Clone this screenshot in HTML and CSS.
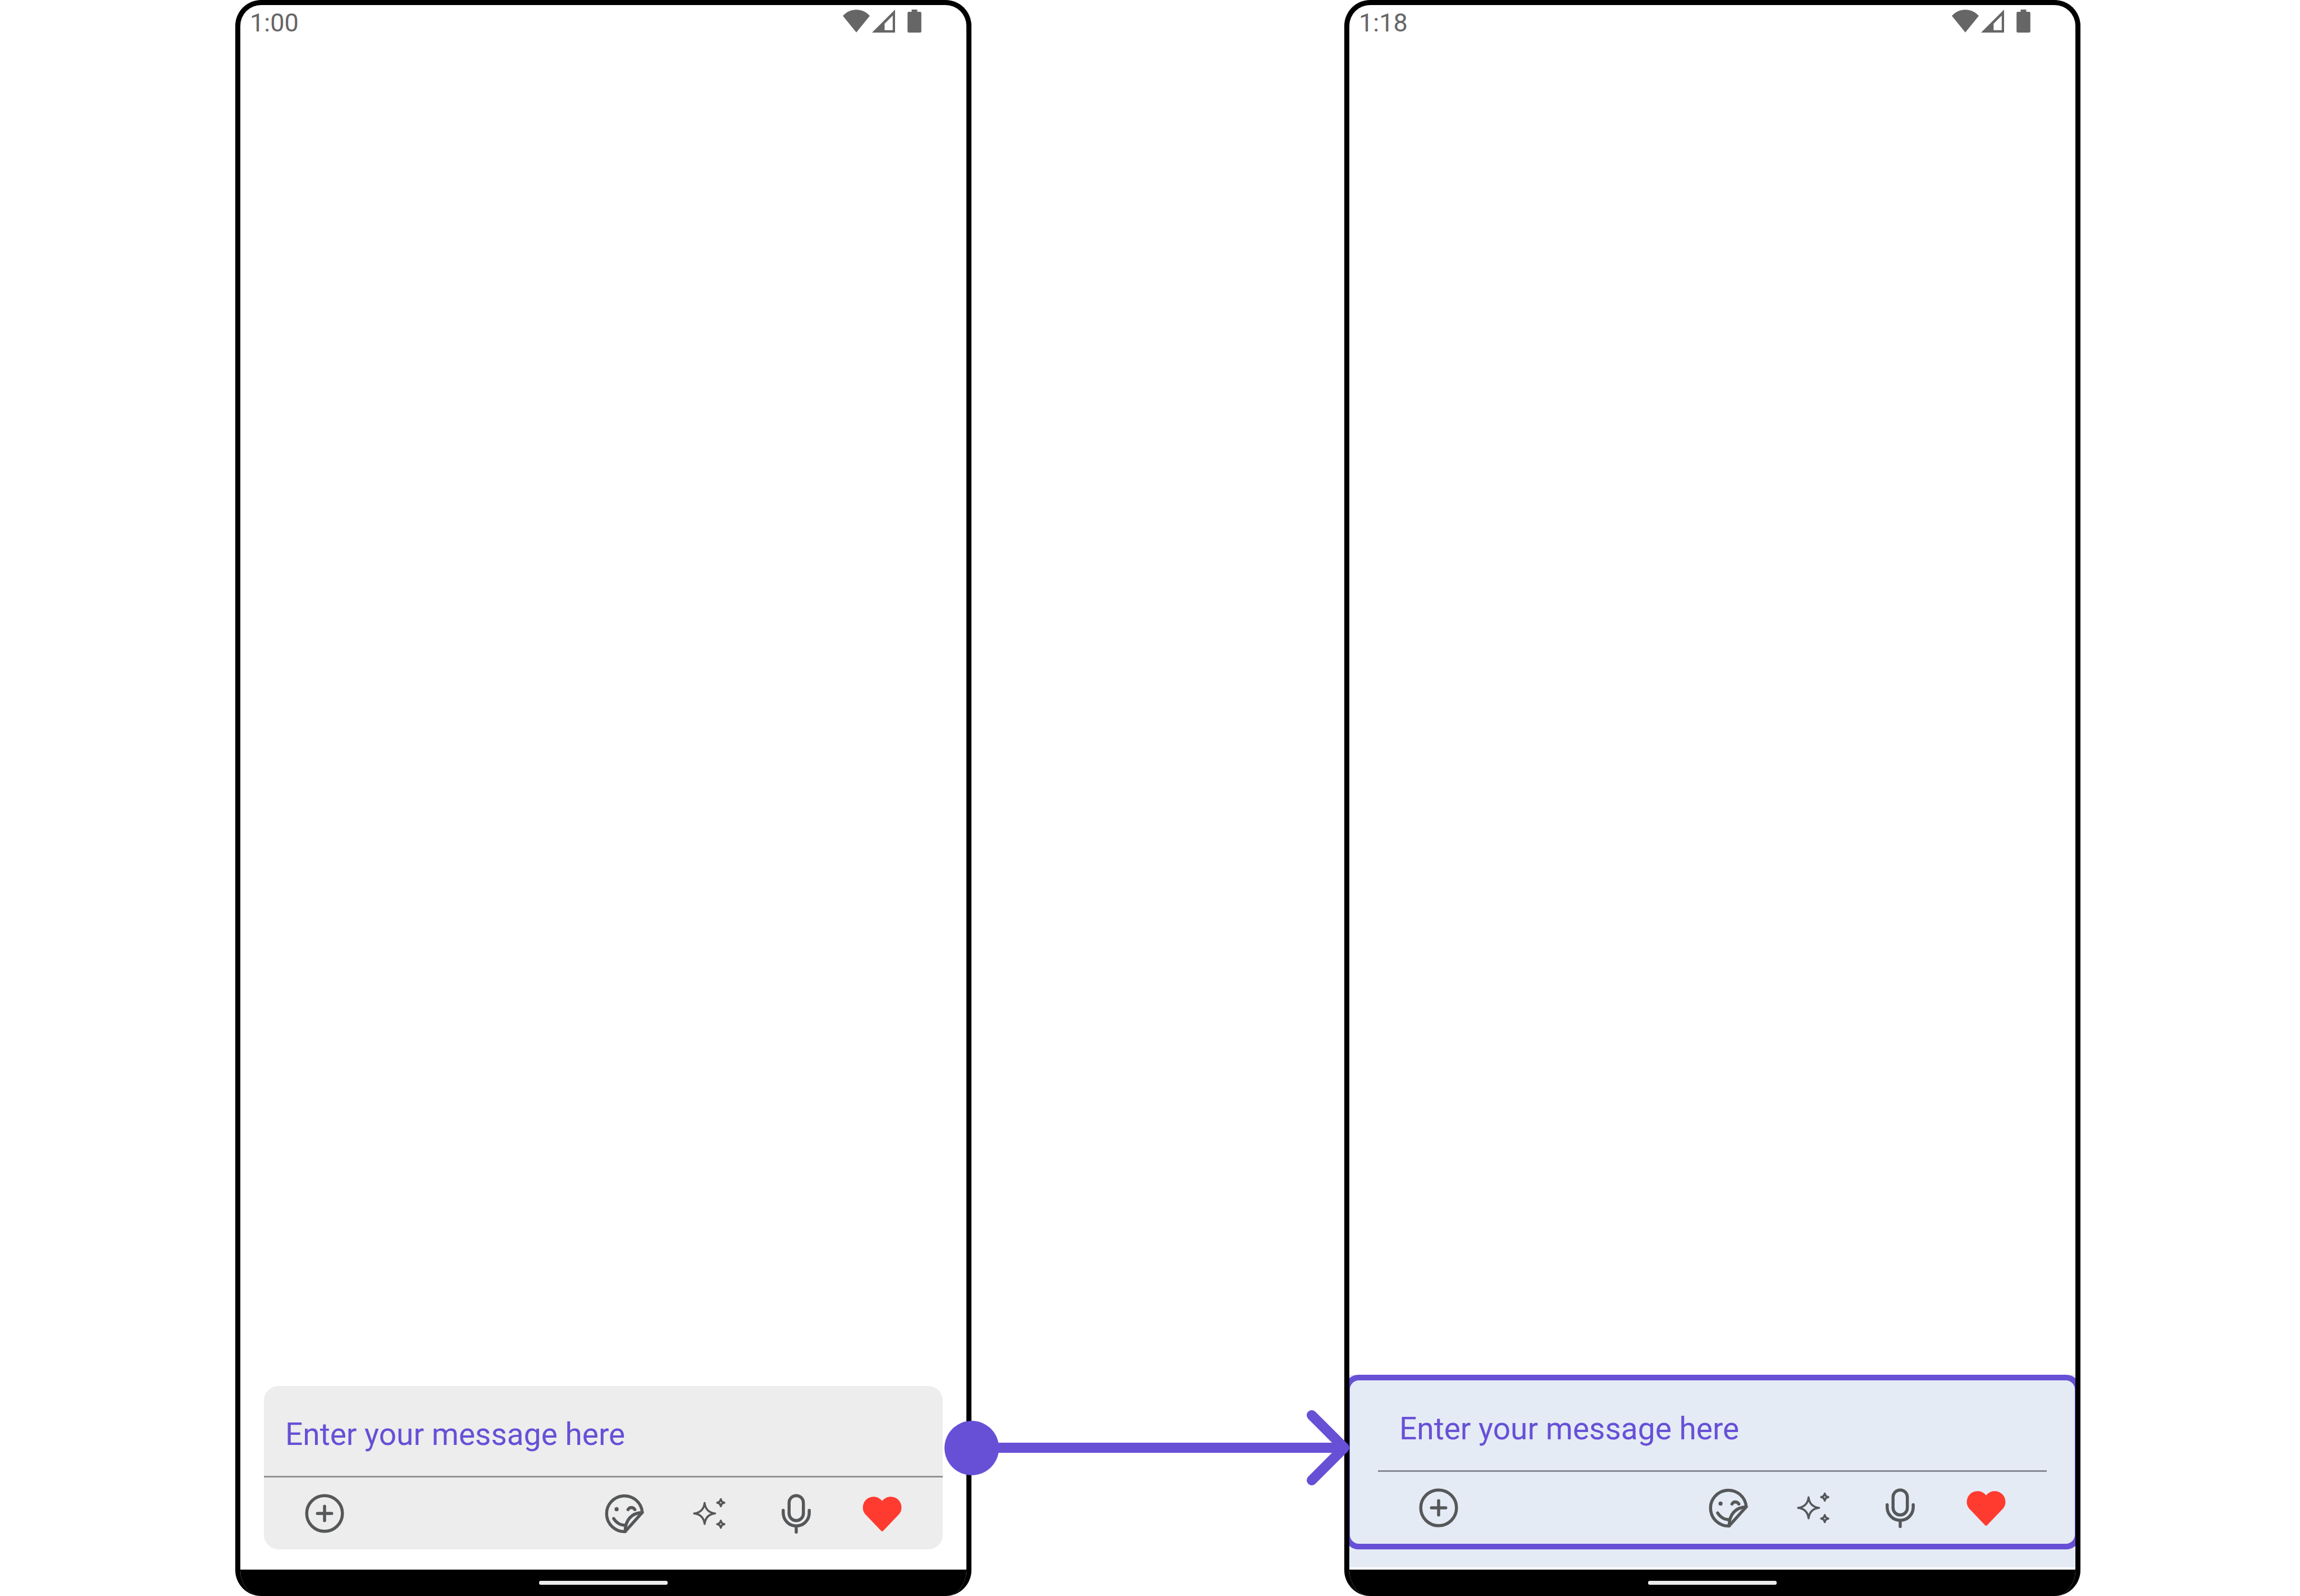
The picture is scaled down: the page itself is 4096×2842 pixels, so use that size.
FILE: index.html
```html
<!DOCTYPE html>
<html lang="en">
<head>
<meta charset="utf-8">
<meta name="viewport" content="width=device-width, initial-scale=1">
<title>Message composer</title>
<link rel="stylesheet" href="styles.css">
</head>
<body>
<svg class="sprite" aria-hidden="true">
  <symbol id="wifi" viewBox="0 0 52 44"><path d="M0 12C14-4 38-4 52 12L26 44Z"/></symbol>
  <symbol id="cell" viewBox="0 0 44 44"><path fill-rule="evenodd" d="M44 0V44H0ZM39.500 11.500L24 27V39.500H39.500Z"/></symbol>
  <symbol id="battery" viewBox="0 0 27 45"><path d="M8 0H19V4.500H24.500A2.500 2.500 0 0 1 27 7V42.500A2.500 2.500 0 0 1 24.500 45H2.500A2.500 2.500 0 0 1 0 42.500V7A2.500 2.500 0 0 1 2.500 4.500H8Z"/></symbol>
  <symbol id="plus" viewBox="-44 -44 88 88"><circle r="35"/><path d="M-14 0H14M0-14V14"/></symbol>
  <symbol id="sticker" viewBox="-44 -44 88 88">
    <path d="M35-2A35 35 0 1 0 1.500 35.500Z"/>
    <path d="M35-2C14-1 1.500 13 1.500 35.500"/>
    <path d="M-21 10C-16 18-8 23 1.500 23M7-7.500C10-13 17-13 20.500-7.500"/>
    <circle class="dot" cx="-15.300" cy="-8.300" r="4"/>
  </symbol>
  <symbol id="sparkles" viewBox="-44 -44 88 88">
    <path class="thin" d="M-11.200-20.500C-9.700-8-3.200-1.500 9.300 0C-3.200 1.500-9.700 8-11.200 20.500C-12.700 8-19.200 1.500-31.700 0C-19.200-1.500-12.700-8-11.200-20.500Z"/>
    <path class="thin" d="M20.500-28Q21.500-22 27.500-21Q21.500-20 20.500-14Q19.500-20 13.500-21Q19.500-22 20.500-28Z"/>
    <path class="thin" d="M20.500 14Q21.500 20 27.500 21Q21.500 22 20.500 28Q19.500 22 13.500 21Q19.500 20 20.500 14Z"/>
  </symbol>
  <symbol id="mic" viewBox="-44 -44 88 88">
    <rect x="-14" y="-35" width="28" height="49" rx="14"/>
    <path d="M-25.500-6V-1A25.500 25.500 0 0 0 25.500-1V-6M0 25V36.500"/>
  </symbol>
  <symbol id="heart" viewBox="-44 -44 88 88"><path d="M0-24.500L-3.500-28A21 21 0 0 0-33.500 1L-2 34Q0 36 2 34L33.500 1A21 21 0 0 0 3.500-28Z"/></symbol>
</svg>

<main class="stage">
  <section class="phone phone-before">
    <header class="status">
      <time class="clock">1:00</time>
      <svg class="wifi"><use href="#wifi"/></svg>
      <svg class="cell"><use href="#cell"/></svg>
      <svg class="battery"><use href="#battery"/></svg>
    </header>
    <div class="sheet">
      <form class="composer">
        <input class="message" type="text" placeholder="Enter your message here" aria-label="Message">
        <div class="tools">
          <button class="tool add" type="button" aria-label="Add"><svg><use href="#plus"/></svg></button>
          <button class="tool" type="button" aria-label="Stickers"><svg><use href="#sticker"/></svg></button>
          <button class="tool" type="button" aria-label="Suggestions"><svg><use href="#sparkles"/></svg></button>
          <button class="tool" type="button" aria-label="Voice"><svg><use href="#mic"/></svg></button>
          <button class="tool like" type="button" aria-label="Like"><svg><use href="#heart"/></svg></button>
        </div>
      </form>
    </div>
    <footer class="nav"><span class="handle"></span></footer>
  </section>

  <div class="connector">
    <span class="knob"></span>
    <svg class="head" viewBox="0 0 84 148"><path d="M10 10L74 74L10 138"/></svg>
  </div>

  <section class="phone phone-after">
    <header class="status">
      <time class="clock">1:18</time>
      <svg class="wifi"><use href="#wifi"/></svg>
      <svg class="cell"><use href="#cell"/></svg>
      <svg class="battery"><use href="#battery"/></svg>
    </header>
    <div class="sheet sheet-tinted">
      <div class="outline">
        <form class="composer">
          <input class="message" type="text" placeholder="Enter your message here" aria-label="Message">
          <div class="tools">
            <button class="tool add" type="button" aria-label="Add"><svg><use href="#plus"/></svg></button>
            <button class="tool" type="button" aria-label="Stickers"><svg><use href="#sticker"/></svg></button>
            <button class="tool" type="button" aria-label="Suggestions"><svg><use href="#sparkles"/></svg></button>
            <button class="tool" type="button" aria-label="Voice"><svg><use href="#mic"/></svg></button>
            <button class="tool like" type="button" aria-label="Like"><svg><use href="#heart"/></svg></button>
          </div>
        </form>
      </div>
    </div>
    <footer class="nav"><span class="handle"></span></footer>
  </section>
</main>
</body>
</html>
```
FILE: styles.css
```css
:root {
  --accent: #6750d6;
  --ink: #555759;
  --status: #666666;
}

* {
  box-sizing: border-box;
}

body {
  margin: 0;
  background: #ffffff;
  font-family: Roboto, "Liberation Sans", sans-serif;
}

.sprite {
  position: absolute;
  width: 0;
  height: 0;
}

.stage {
  display: grid;
  grid-template-columns: 419fr 1311fr 664fr 1311fr 391fr;
  min-height: 100vh;
}

/* Phone frame */
.phone {
  display: flex;
  flex-direction: column;
  border: 9px solid #000000;
  border-bottom: 0;
  border-radius: 46px;
  background: #ffffff;
  overflow: hidden;
}

.phone-before {
  grid-column: 2;
}

.phone-after {
  grid-column: 4;
}

.status {
  display: flex;
  align-items: center;
  height: 57px;
  padding: 0 80px 0 17px;
  fill: var(--status);
}

.clock {
  margin-right: auto;
  padding-top: 6px;
  color: var(--status);
  font-size: 45px;
  line-height: 52px;
}

.wifi {
  width: 48px;
  height: 41px;
}

.cell {
  width: 41px;
  height: 41px;
  margin: 0 22px 0 4px;
}

.battery {
  width: 25px;
  height: 41px;
}

.nav {
  display: flex;
  align-items: center;
  justify-content: center;
  height: 47px;
  background: #000000;
}

.handle {
  width: 229px;
  height: 7px;
  border-radius: 3px;
  background: #ebebeb;
}

/* Composer */
.sheet {
  --surface: #ededed;
  --rule: #939393;
  margin-top: auto;
  padding: 0 42px 36px;
}

.sheet-tinted {
  --surface: #e4ebf5;
  --rule: #868a91;
  margin-bottom: 4px;
  padding: 0 0 32px;
  background: var(--surface);
}

.outline {
  margin: 0 -9px;
  padding: 0 50px;
  border: 10px solid var(--accent);
  border-radius: 26px;
}

.composer {
  border-radius: 26px;
  background: var(--surface);
}

.message {
  display: block;
  width: 100%;
  height: 163px;
  padding: 12px 38px 0;
  border: 0;
  border-bottom: 3px solid var(--rule);
  background: none;
  font-family: inherit;
  font-size: 55px;
  outline: none;
}

.message::placeholder {
  color: var(--accent);
  opacity: 1;
}

.tools {
  display: flex;
  align-items: center;
  gap: 73px;
  height: 128px;
  padding: 0 68px;
}

.tool {
  width: 80px;
  height: 80px;
  padding: 0;
  border: 0;
  background: none;
}

.tool svg {
  display: block;
  width: 80px;
  height: 80px;
  fill: none;
  stroke: var(--ink);
  stroke-width: 6;
  stroke-linecap: round;
  stroke-linejoin: round;
}

.add {
  margin-right: auto;
}

.like svg {
  fill: #ff3b30;
  stroke: none;
}

.thin {
  stroke-width: 4;
}

.dot {
  fill: var(--ink);
  stroke: none;
}

/* Arrow between the phones */
.connector {
  position: relative;
  grid-column: 3;
  align-self: end;
  height: 18px;
  margin-bottom: 255px;
  background: var(--accent);
}

.knob {
  position: absolute;
  top: -39px;
  left: -48px;
  width: 97px;
  height: 97px;
  border-radius: 50%;
  background: var(--accent);
}

.head {
  position: absolute;
  top: -58px;
  right: -9px;
  z-index: 1;
  width: 76px;
  height: 134px;
  fill: none;
  stroke: var(--accent);
  stroke-width: 20;
  stroke-linecap: round;
  stroke-linejoin: round;
}
```
